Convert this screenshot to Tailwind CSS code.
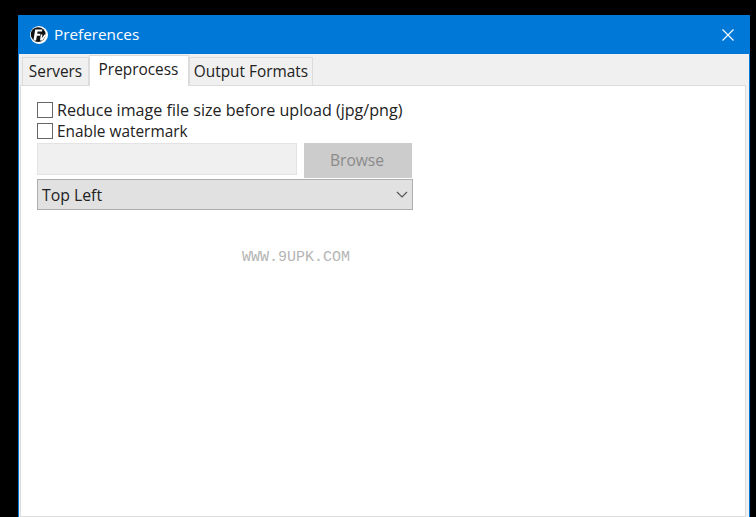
<!doctype html>
<html>
<head>
  <meta charset="UTF-8">
  <meta name="viewport" content="width=device-width, initial-scale=1.0">
  <script src="https://cdn.jsdelivr.net/npm/@tailwindcss/browser@4"></script>
</head>
<body class="bg-black overflow-hidden h-[517px] font-['Open_Sans','Noto_Sans',sans-serif] text-[16px] text-[#222]">

<div class="ml-[18px] mt-[15px] w-[732px] h-[502px] border-x border-[#0078d7] bg-[#f0f0f0] flex flex-col">
    <!-- title bar -->
    <div class="h-[39px] -mx-px bg-[#0078d7] flex items-center pl-[12px] pr-[16px] text-white shrink-0">
        <svg class="w-[18px] h-[18px] mr-[6px]" viewBox="0 0 18 18">
            <circle cx="9" cy="9" r="9" fill="#fff"/>
            <circle cx="8.2" cy="8.6" r="7.4" fill="#111"/>
            <path d="M3.4 14.5 L5.2 3.6 H12.4 L12 5.6 H7.6 L7.2 7.8 H10.4 L10 9.8 H6.9 L6.1 14.5 Z" fill="#fff"/>
            <path d="M10.8 8.6 H12.4 L11.9 12 L14.6 8.6 H16.8 L16 9.6 L12.4 14.4 H10 Z" fill="#fff"/>
        </svg>
        <span class="leading-none text-[15.3px]">Preferences</span>
        <svg class="ml-auto w-[12px] h-[12px] mt-[1px]" viewBox="0 0 12 12" stroke="#fff" stroke-width="1.1" fill="none">
            <path d="M0.5 0.5 L11.5 11.5 M11.5 0.5 L0.5 11.5"/>
        </svg>
    </div>

    <!-- tabs -->
    <div class="h-[31px] flex items-end pl-[3px] shrink-0 relative z-10 text-[15.4px]">
        <div class="h-[28px] w-[67px] bg-[#f0f0f0] border border-b-0 border-[#dcdcdc] flex items-center justify-center pt-[1px]">Servers</div>
        <div class="h-[31px] w-[100px] -mb-px bg-white border border-b-0 border-[#dcdcdc] flex items-center justify-center pb-[2px] pr-[1px]">Preprocess</div>
        <div class="h-[28px] w-[124px] bg-[#f0f0f0] border border-b-0 border-[#dcdcdc] flex items-center justify-center pt-[1px]">Output Formats</div>
    </div>

    <!-- panel -->
    <div class="relative flex-1 ml-[1px] mr-[3px] bg-white border border-[#dcdcdc] pl-[16px] pt-[13px]">
        <label class="flex items-center h-[21px] gap-[4px]">
            <span class="w-[16px] h-[16px] border border-[#666] bg-white"></span>
            <span class="text-[16.1px] pt-[2px]">Reduce image file size before upload (jpg/png)</span>
        </label>
        <label class="flex items-center h-[21px] gap-[4px]">
            <span class="w-[16px] h-[16px] border border-[#666] bg-white"></span>
            <span class="text-[15.4px] pt-[2px]">Enable watermark</span>
        </label>
        <div class="flex items-center mt-[1px] h-[36px]">
            <div class="w-[260px] h-[32px] mb-[2px] bg-[#f0f0f0] border border-[#e3e3e3]"></div>
            <div class="ml-[7px] w-[108px] h-[35px] bg-[#cccccc] text-[#8a8a8a] text-[15.6px] flex items-center justify-center pr-[2px] pt-[1px]">Browse</div>
        </div>
        <div class="w-[376px] h-[31px] mt-[1px] bg-[#e1e1e1] border border-[#adadad] flex items-center pl-[4px] pr-[4px]">
            <span class="text-[15.8px] pt-[2px]">Top Left</span>
            <svg class="ml-auto w-[12px] h-[7px]" viewBox="0 0 12 7" fill="none" stroke="#555" stroke-width="1.2"><path d="M1 1 L6 6 L11 1"/></svg>
        </div>
        <div class="absolute left-[221px] top-[164px] font-['Liberation_Mono',monospace] text-[15px] leading-none text-[#b5b5b5]">WWW.9UPK.COM</div>
    </div>
</div>

</body>
</html>
